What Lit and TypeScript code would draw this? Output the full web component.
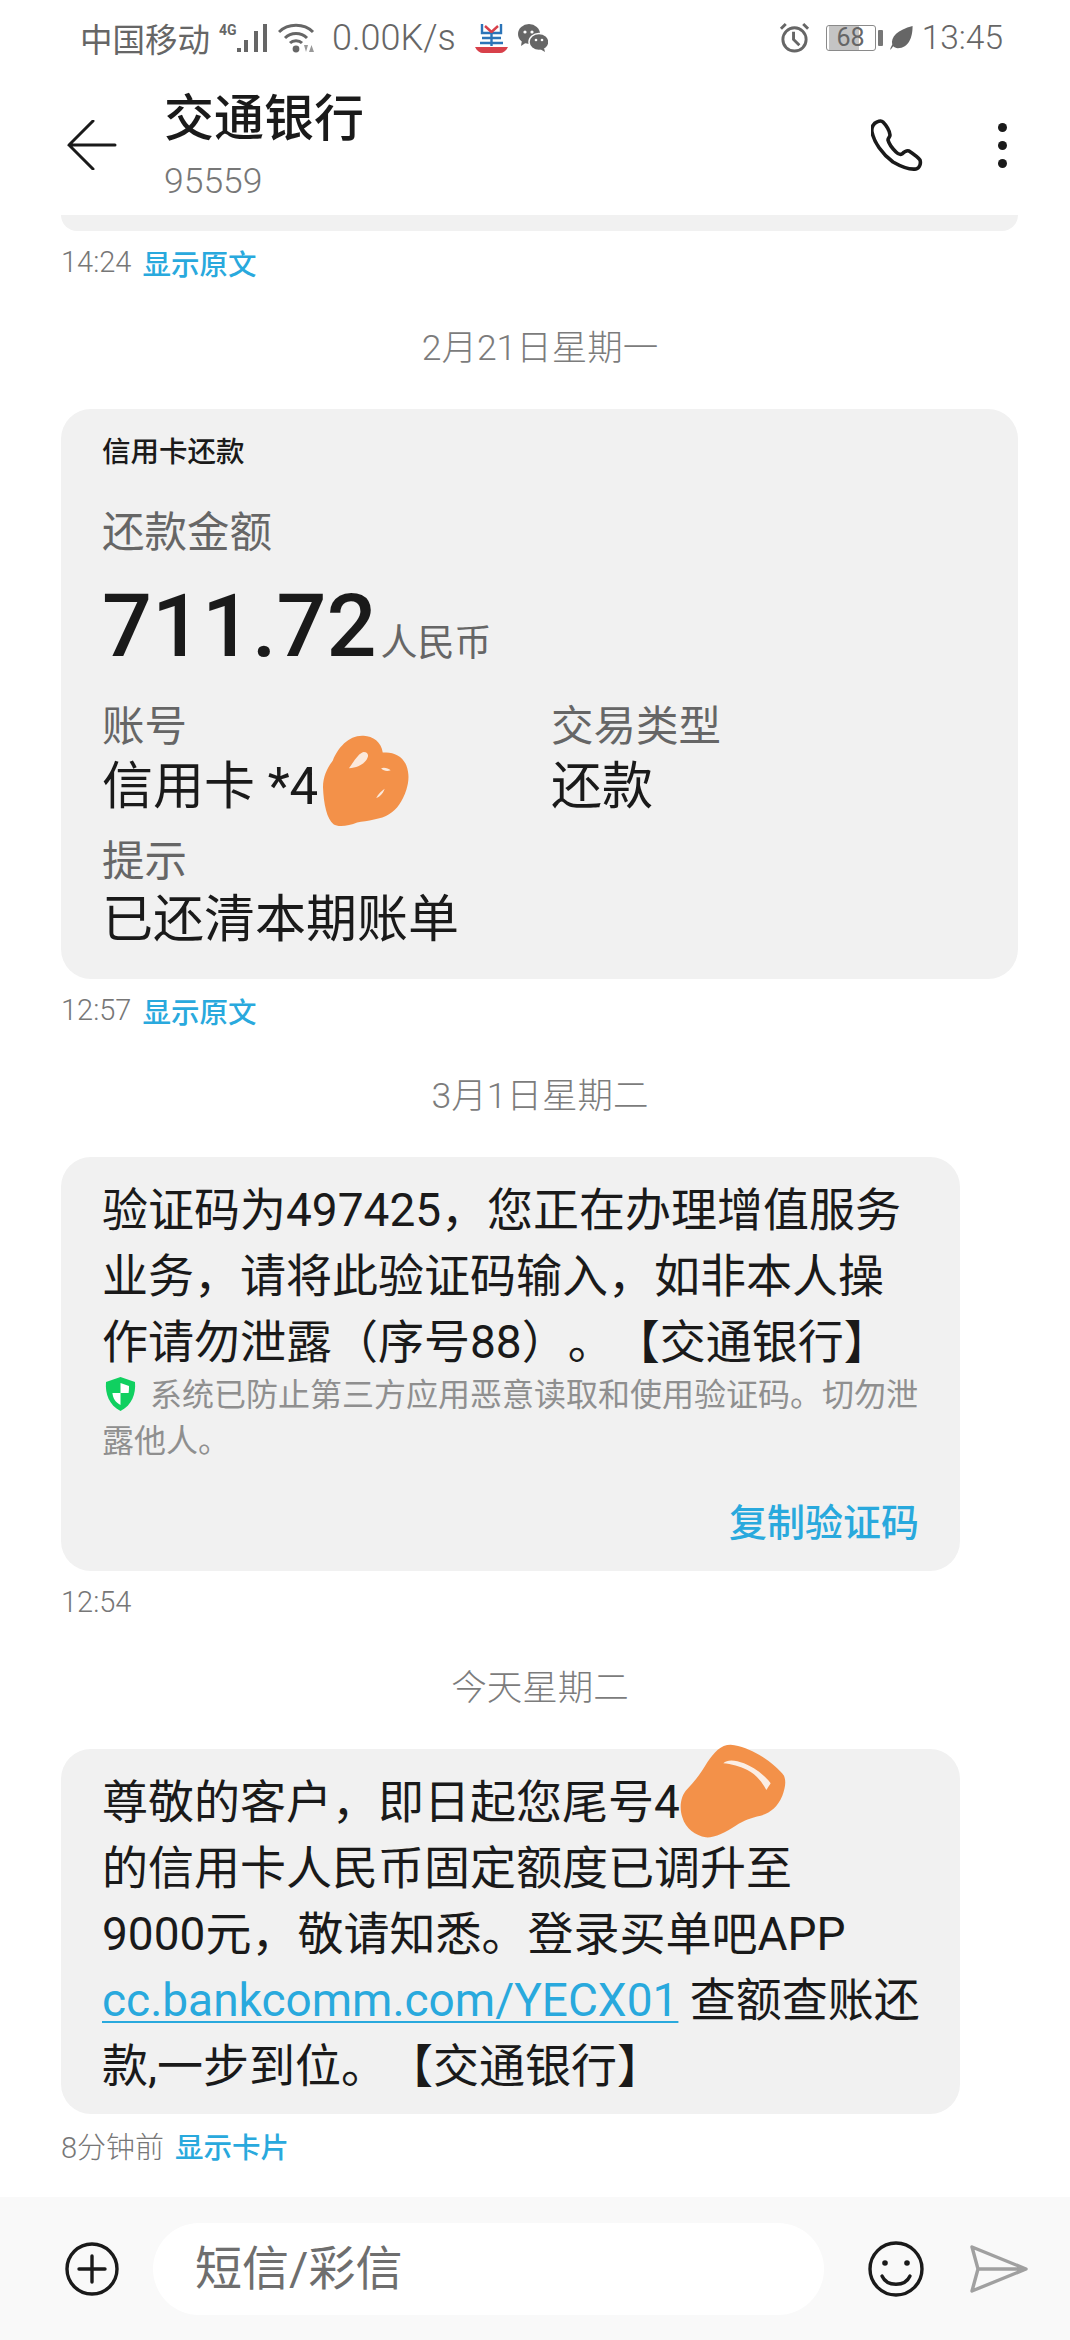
import { LitElement, html, css } from 'lit';
import { customElement } from 'lit/decorators.js';

const shield = html`<svg class="shield" width="31" height="34" viewBox="0 0 31 34">
  <path d="M15.5 0 L30 5 C31 17 27 28 15.5 34 C4 28 0 17 1 5 Z" fill="#10d060"/>
  <path d="M15.5 6 L24 9 C24 11 24 13 23.6 16 L15.5 16 Z M15.5 16 L15.5 28 C10 25 8 21 7.4 16 Z" fill="#fff"/>
</svg>`;

@customElement('app-root')
export class AppRoot extends LitElement {
    static styles = css`
    :host {
      display: block;
      width: 1070px;
      height: 2340px;
      overflow: hidden;
      background: #fff;
      color: #1a1a1a;
      font-family: Roboto, "Noto Sans CJK SC", sans-serif;
      text-spacing-trim: space-all;
    }
    .page {
      position: relative;
      display: flex;
      flex-direction: column;
      height: 2340px;
    }

    /* status bar */
    .status {
      display: flex;
      align-items: center;
      height: 75px;
      padding: 0 67px 0 80px;
      color: #666;
      font-size: 32.5px;
    }
    .status svg { display: block; flex: none; }
    .net { position: relative; width: 52px; height: 32px; margin-left: 7px; }
    .net b { position: absolute; left: 2px; top: 1px; font-size: 14px; line-height: 14px; font-weight: 700; }
    .net svg { position: absolute; left: 19px; top: 1px; }
    .wifi { margin-left: 9px; }
    .speed { margin-left: 17px; font-size: 36px; font-weight: 300; }
    .app-a { margin-left: 19px; }
    .app-b { margin-left: 10px; }
    .spacer { flex: 1; }
    .battery {
      width: 50px;
      height: 26px;
      margin-left: 16px;
      border: 1.5px solid #8a8a8a;
      border-radius: 3px;
      box-sizing: border-box;
      background: linear-gradient(90deg, #fff 5%, #c4c4c4 5%, #c4c4c4 66%, #fff 66%);
      font-size: 25px;
      line-height: 23px;
      text-align: center;
    }
    .plug { width: 5px; height: 16px; margin-left: 2px; background: #777; border-radius: 1px; }
    .leaf { margin-left: 7px; }
    .clock { margin-left: 9px; font-size: 33.5px; font-weight: 300; }

    /* header */
    .header {
      display: flex;
      align-items: center;
      height: 140px;
      padding: 0 63px 0 67px;
    }
    .header-back { flex: none; }
    .title { margin-left: 47px; flex: 1; margin-top: -1px; }
    .title h1 { margin: 0; font-size: 50px; line-height: 66px; font-weight: 500; }
    .title div { font-size: 35.5px; line-height: 44px; color: #777; font-weight: 300; margin-top: 7px; }
    .header-call { flex: none; margin-right: 75px; }
    .dots { display: flex; flex-direction: column; gap: 9px; }
    .dots i { width: 9px; height: 9px; border-radius: 50%; background: #1a1a1a; }

    /* thread */
    .thread { display: flex; flex-direction: column; padding-left: 61px; }
    .card-end {
      width: 957px;
      height: 16px;
      background: #f1f1f1;
      border-radius: 0 0 30px 30px;
    }
    .meta {
      display: flex;
      align-items: center;
      gap: 11px;
      height: 38px;
      margin-top: 12px;
      font-size: 29px;
      color: #777;
      font-weight: 300;
    }
    .meta a { color: #29a9dd; font-weight: 500; font-size: 28.5px; }
    .date {
      box-sizing: border-box;
      display: flex;
      align-items: center;
      justify-content: center;
      width: 1080px;
      height: 128px;
      margin-left: -61px;
      padding-bottom: 2px;
      font-size: 35.5px;
      color: #7c7c7c;
      font-weight: 300;
    }
    .bubble {
      box-sizing: border-box;
      width: 899px;
      background: #f1f1f1;
      border-radius: 30px;
      padding: 20px 41px 15px;
    }
    .wide { width: 957px; height: 570px; padding: 24px 41px 0; }
    .sms { font-size: 46px; line-height: 66px; white-space: nowrap; }
    .sms a { color: #29a9dd; text-decoration: underline; text-decoration-thickness: 2px; text-underline-offset: 5px; }
    .code { height: 414px; padding-bottom: 0; }

    .notice {
      margin-top: -3px;
      font-size: 32px;
      line-height: 46px;
      color: #8f8f8f;
      white-space: nowrap;
    }
    .shield { margin: 0 14px 0 3px; vertical-align: -5px; }
    .copy {
      margin-top: 34px;
      text-align: right;
      font-size: 38px;
      line-height: 50px;
      font-weight: 500;
      color: #29a9dd;
    }

    /* repayment card */
    .kind { font-size: 28.5px; line-height: 40px; font-weight: 500; }
    .label { font-size: 42.5px; line-height: 56px; color: #666; }
    .kind + .label { margin-top: 32px; }
    .value { font-size: 51px; line-height: 64px; }
    .amount { display: flex; align-items: baseline; height: 138px; line-height: 130px; }
    .amount b { font-size: 88px; font-weight: 500; }
    .amount span { margin-left: 4px; font-size: 37px; color: #666; }
    .fields { display: grid; grid-template-columns: 449px 1fr; }
    .tip { margin-top: 15px; }
    .tip + .value { margin-top: -2px; }

    /* composer */
    .composer {
      display: flex;
      align-items: center;
      height: 143px;
      margin-top: auto;
      padding-left: 65px;
      background: #f9f9f9;
    }
    .composer svg { flex: none; display: block; }
    .input {
      box-sizing: border-box;
      width: 671px;
      height: 92px;
      margin-left: 34px;
      padding-left: 42px;
      border-radius: 46px;
      background: #fff;
      color: #6e6e6e;
      font-size: 47px;
      line-height: 92px;
    }
    .smile { margin-left: 44px; }
    .send { margin-left: 46px; }

    /* scribbles lying over the account digits */
    .blob { position: absolute; }
    .blob-a { left: 323px; top: 735px; }
    .blob-b { left: 680px; top: 1744px; }
  `;

    renderStatus() {
        return html`<div class="status">
      <span>中国移动</span>
      <div class="net"><b>4G</b>
        <svg width="33" height="30" viewBox="0 0 33 30" fill="#666">
          <rect x="1" y="25" width="4" height="4"/><rect x="8" y="17" width="4" height="12"/>
          <rect x="18" y="8" width="4" height="21"/><rect x="27" y="1" width="4" height="28"/>
        </svg>
      </div>
      <svg class="wifi" width="37" height="30" viewBox="0 0 37 30" fill="none" stroke="#666" stroke-width="3">
        <path d="M1 9 C10 0 26 0 35 9"/><path d="M7 15 C13 9 23 9 29 15"/><path d="M12 20 C15 17 21 17 24 20"/>
        <circle cx="18" cy="26" r="3.4" fill="#666" stroke="none"/>
        <path d="M26 22 H30 L28 29 Z M31 29 H36 L33.5 22 Z" fill="#999" stroke="none"/>
      </svg>
      <span class="speed">0.00K/s</span>
      <svg class="app-a" width="33" height="32" viewBox="0 0 33 32" fill="none">
        <path d="M7 2 V11 H26 V2" stroke="#2b74b8" stroke-width="2.4"/>
        <path d="M10 4 L16.5 10 L23 4" stroke="#d8404a" stroke-width="2.4"/>
        <path d="M16.5 11 V24 M7 16 H26 M5 21 H28" stroke="#2b74b8" stroke-width="2.4"/>
        <path d="M0 25 H33 C31 29 28 31 25 31 H8 C5 31 2 29 0 25 Z" fill="#d8404a"/>
      </svg>
      <svg class="app-b" width="30" height="28" viewBox="0 0 30 28" fill="#666">
        <ellipse cx="11" cy="10" rx="11" ry="10"/>
        <path d="M4 16 L3 22 L9 18 Z"/>
        <ellipse cx="21" cy="18" rx="10" ry="8.5" stroke="#fff" stroke-width="1.5"/>
        <path d="M26 24 L27 28 L22 25 Z"/>
        <circle cx="7" cy="8" r="1.6" fill="#fff"/><circle cx="14" cy="8" r="1.6" fill="#fff"/>
        <circle cx="18" cy="16" r="1.3" fill="#fff"/><circle cx="24" cy="16" r="1.3" fill="#fff"/>
      </svg>
      <div class="spacer"></div>
      <svg width="31" height="31" viewBox="0 0 32 32" fill="none" stroke="#666">
        <circle cx="16" cy="18" r="12" stroke-width="3"/>
        <path d="M15 10 V18 L21 24" stroke-width="3"/>
        <path d="M2 7 L7 2 M30 7 L25 2" stroke-width="3"/>
      </svg>
      <div class="battery">68</div>
      <div class="plug"></div>
      <svg class="leaf" width="23" height="24" viewBox="0 0 24 26" fill="#666">
        <path d="M24 0 C24 12 20 24 8 24 C6 24 4 23 3 22 L0 26 L0 24 L2 20 C0 12 8 4 24 0 Z"/>
      </svg>
      <span class="clock">13:45</span>
    </div>`;
    }

    renderHeader() {
        return html`<div class="header">
      <svg class="header-back" width="50" height="50" viewBox="0 0 50 50" fill="none" stroke="#1a1a1a" stroke-width="3" stroke-linecap="round">
        <path d="M26 1 L2 25 L26 49 M2 25 H48"/>
      </svg>
      <div class="title"><h1>交通银行</h1><div>95559</div></div>
      <svg class="header-call" width="52" height="52" viewBox="0 0 52 52" fill="none" stroke="#1a1a1a" stroke-width="3.6" stroke-linejoin="round">
        <path d="M6 3 C3 4 0 8 1 13 C3 23 11 35 22 43 C29 47 38 51 45 50 C49 49 50 44 49 41 C47 38 41 34 38 32 C35 31 33 33 31 35 C29 36 27 35 25 33 C21 29 18 25 17 21 C17 19 19 18 19 16 C19 12 15 6 12 3 C10 1 8 2 6 3 Z"/>
      </svg>
      <div class="dots"><i></i><i></i><i></i></div>
    </div>`;
    }

    renderComposer() {
        return html`<div class="composer">
      <svg width="54" height="54" viewBox="0 0 54 54" fill="none" stroke="#1a1a1a" stroke-width="3.4" stroke-linecap="round">
        <circle cx="27" cy="27" r="25"/><path d="M27 14 V40 M14 27 H40"/>
      </svg>
      <div class="input">短信/彩信</div>
      <svg class="smile" width="56" height="56" viewBox="0 0 56 56" fill="none" stroke="#1a1a1a" stroke-width="3.4" stroke-linecap="round">
        <circle cx="28" cy="28" r="26"/>
        <circle cx="17" cy="22" r="2.8" fill="#1a1a1a" stroke="none"/><circle cx="39" cy="22" r="2.8" fill="#1a1a1a" stroke="none"/>
        <path d="M14 35 C19 46 37 46 42 35"/>
      </svg>
      <svg class="send" width="58" height="48" viewBox="0 0 58 48" fill="none" stroke="#a0a0a0" stroke-width="3.4" stroke-linejoin="round">
        <path d="M2 2 L56 24 L2 46 L8 24 Z M8 24 H56"/>
      </svg>
    </div>`;
    }

    render() {
        return html`<div class="page">
      ${this.renderStatus()}
      ${this.renderHeader()}
      <div class="thread">
        <div class="card-end"></div>
        <div class="meta"><span>14:24</span><a>显示原文</a></div>

        <div class="date">2月21日星期一</div>
        <div class="bubble wide">
          <div class="kind">信用卡还款</div>
          <div class="label">还款金额</div>
          <div class="amount"><b>711.72</b><span>人民币</span></div>
          <div class="fields">
            <div><div class="label">账号</div><div class="value">信用卡 *4</div></div>
            <div><div class="label">交易类型</div><div class="value">还款</div></div>
          </div>
          <div class="label tip">提示</div>
          <div class="value">已还清本期账单</div>
        </div>
        <div class="meta"><span>12:57</span><a>显示原文</a></div>

        <div class="date">3月1日星期二</div>
        <div class="bubble code">
          <div class="sms">验证码为497425，您正在办理增值服务<br>业务，请将此验证码输入，如非本人操<br>作请勿泄露（序号88）。【交通银行】</div>
          <div class="notice">${shield}系统已防止第三方应用恶意读取和使用验证码。切勿泄<br>露他人。</div>
          <div class="copy">复制验证码</div>
        </div>
        <div class="meta"><span>12:54</span></div>

        <div class="date">今天星期二</div>
        <div class="bubble">
          <div class="sms">尊敬的客户，即日起您尾号4<br>的信用卡人民币固定额度已调升至<br>9000元，敬请知悉。登录买单吧APP<br><a>cc.bankcomm.com/YECX01</a> 查额查账还<br>款,一步到位。【交通银行】</div>
        </div>
        <div class="meta"><span>8分钟前</span><a>显示卡片</a></div>
      </div>
      ${this.renderComposer()}

      <svg class="blob blob-a" width="86" height="93" viewBox="66 72 262 280">
        <path fill="#f39149" d="M190 73 C218 74 244 92 248 124 C278 120 308 133 320 163 C330 190 327 215 320 237 C308 272 292 297 267 312 C245 327 200 332 170 337 C145 347 112 352 98 342 C78 326 68 280 66 230 C66 195 80 170 96 148 C112 108 146 70 190 73 Z"/>
        <path fill="#fbe9dc" d="M145 172 C160 150 175 125 190 122 C205 122 207 135 197 148 C188 160 170 170 145 172 Z"/>
        <path fill="#fbe9dc" d="M243 172 C252 168 265 172 272 178 C262 182 250 180 243 172 Z"/>
        <path fill="#fbe9dc" d="M228 262 C235 250 245 240 254 234 C248 250 240 258 228 262 Z"/>
      </svg>
      <svg class="blob blob-b" width="106" height="94" viewBox="238 70 318 282">
        <path fill="#f39149" d="M390 72 C420 74 450 88 475 102 C505 120 535 145 550 165 C558 185 552 205 545 225 C530 260 510 275 480 285 C450 292 430 298 405 315 C375 335 340 352 315 350 C285 345 255 325 245 290 C235 260 240 225 260 205 C285 180 305 150 320 125 C340 95 360 72 390 72 Z"/>
        <path fill="#fbeee4" d="M368 128 C380 115 405 118 430 128 C455 138 490 160 510 188 C505 195 500 205 497 208 C485 185 465 160 440 148 C420 138 390 130 368 128 Z"/>
      </svg>
    </div>`;
    }
}
